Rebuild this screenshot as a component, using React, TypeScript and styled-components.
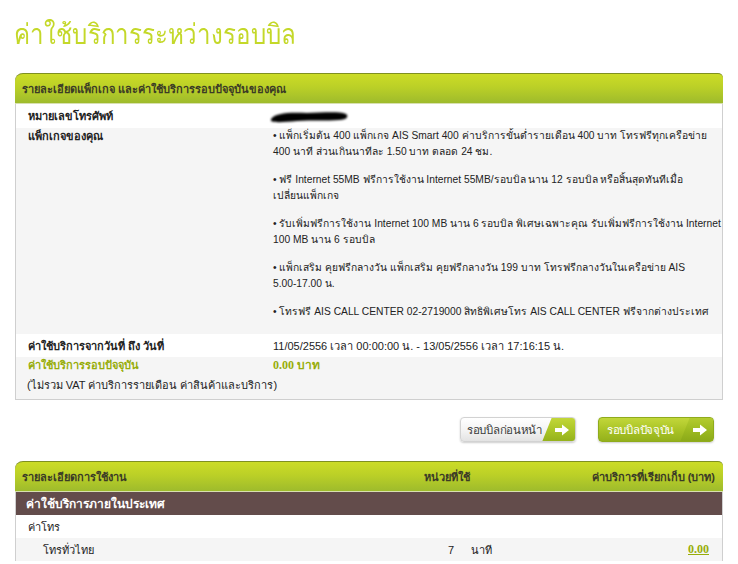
import React from "react";
import styled, { createGlobalStyle } from "styled-components";

const GlobalStyle = createGlobalStyle`
  html, body { margin: 0; padding: 0; background: #ffffff; }
  body { font-family: Tahoma, "Liberation Sans", "DejaVu Sans", sans-serif; font-size: 11px; color: #222; }
`;

const Page = styled.div`
  width: 708px;
  padding: 0 0 0 15px;
`;

const Title = styled.h1`
  margin: 0 0 0 -1px;
  padding: 18px 0 0 0;
  height: 73px;
  box-sizing: border-box;
  font-size: 28px;
  line-height: 34px;
  font-weight: normal;
  color: #c4d829;
  transform: scaleX(0.86);
  transform-origin: left top;
`;

const Panel = styled.section`
  border: 1px solid #cfcfcf;
  border-top: none;
  border-radius: 8px 5px 0 0;
  background: #f5f5f5;
`;

const PanelHeader = styled.div<{ $cols?: boolean }>`
  height: 31px;
  box-sizing: border-box;
  margin: 0 -1px;
  border-top: 1px solid #7f9020;
  border-bottom: 1px solid #d8e0b0;
  border-radius: 8px 5px 0 0;
  background: linear-gradient(#ccdc26, #bbd027 45%, #9ebb2c);
  display: grid;
  grid-template-columns: ${(p) => (p.$cols ? "1fr 120px 245px" : "1fr")};
  align-items: center;
  padding: 0 8px 0 7px;
  font-weight: bold;
  color: #3b3b26;
  font-size: 11px;
`;

const HeadCell = styled.span<{ $right?: boolean }>`
  text-align: ${(p) => (p.$right ? "right" : "left")};
`;

const InfoRow = styled.div<{ $white?: boolean; $h?: number; $pt?: number }>`
  display: flex;
  align-items: flex-start;
  box-sizing: border-box;
  min-height: ${(p) => (p.$h ? `${p.$h}px` : "auto")};
  padding: ${(p) => (p.$pt ?? 4)}px 1px 0 12px;
  background: ${(p) => (p.$white ? "#ffffff" : "#f5f5f5")};
  line-height: 16px;
`;

const Label = styled.div<{ $green?: boolean }>`
  flex: 0 0 245px;
  font-weight: bold;
  color: ${(p) => (p.$green ? "#97ad0a" : "#222")};
`;

const Value = styled.div<{ $green?: boolean }>`
  flex: 1 1 auto;
  min-width: 0;
  color: ${(p) => (p.$green ? "#97ad0a" : "#222")};
  font-weight: ${(p) => (p.$green ? "bold" : "normal")};
  font-family: ${(p) => (p.$green ? `"Liberation Serif", Tahoma, serif` : "inherit")};
  font-size: ${(p) => (p.$green ? "12px" : "11px")};
`;

const PackList = styled.div`
  font-size: 10.25px;
  padding-bottom: 14px;
`;

const PackItem = styled.p`
  margin: 0 0 12px 0;
  line-height: 16px;
  &:last-child { margin-bottom: 0; }
`;

const NoBreak = styled.span`
  white-space: nowrap;
`;

const Note = styled.div`
  padding: 4px 12px 6px 11px;
  line-height: 16px;
`;

const Scribble = styled.svg`
  display: block;
  margin: 2px 0 0 -6px;
`;

const ButtonBar = styled.div`
  display: flex;
  justify-content: flex-end;
  gap: 22px;
  padding: 17px 9px 0 0;
  height: 61px;
  box-sizing: border-box;
`;

const BillButton = styled.button<{ $primary?: boolean }>`
  position: relative;
  width: 116px;
  height: 25px;
  border-radius: 4px;
  border: 1px solid ${(p) => (p.$primary ? "#8fab1c" : "#d2d2d2")};
  background: ${(p) =>
    p.$primary
      ? "linear-gradient(#c2d73a, #a8c225 55%, #94b11c)"
      : "linear-gradient(#ffffff, #f3f3f3 55%, #e3e3e3)"};
  box-shadow: 0 1px 2px rgba(0, 0, 0, 0.2);
  padding: 0 0 0 ${(p) => (p.$primary ? "8px" : "6px")};
  text-align: left;
  font-family: "Liberation Sans", Tahoma, sans-serif;
  font-size: 11.5px;
  letter-spacing: -0.3px;
  color: ${(p) => (p.$primary ? "#ffffff" : "#3a3a3a")};
  overflow: hidden;
  white-space: nowrap;
  cursor: pointer;
`;

const ArrowTab = styled.span<{ $primary?: boolean }>`
  position: absolute;
  right: -1px;
  top: -1px;
  bottom: -1px;
  width: 34px;
  background: ${(p) =>
    p.$primary
      ? "linear-gradient(#b5cd30, #9cb920 55%, #8aa818)"
      : "linear-gradient(#c4d83a, #a9c426 55%, #93b01b)"};
  clip-path: polygon(10px 0, 100% 0, 100% 100%, 0 100%);
  display: flex;
  align-items: center;
  justify-content: center;
  padding-left: 6px;
  box-sizing: border-box;
`;

const Table = styled.section`
  border-left: 1px solid #cfcfcf;
  border-right: 1px solid #cfcfcf;
  border-radius: 8px 5px 0 0;
  background: #ffffff;
`;

const GroupRow = styled.div`
  height: 23px;
  background: #634c4b;
  color: #ffffff;
  font-weight: bold;
  font-size: 12px;
  display: flex;
  align-items: center;
  padding-left: 10px;
`;

const UsageRow = styled.div<{ $alt?: boolean; $indent: number }>`
  height: 23px;
  display: grid;
  grid-template-columns: 1fr 43px 55px 200px;
  align-items: center;
  background: ${(p) => (p.$alt ? "#f5f5f5" : "#ffffff")};
  padding-left: ${(p) => p.$indent}px;
  padding-right: 13px;
`;

const Qty = styled.span`
  text-align: right;
`;

const Unit = styled.span`
  padding-left: 17px;
`;

const Amount = styled.a`
  justify-self: end;
  color: #97ad0a;
  font-weight: bold;
  font-family: "Liberation Serif", serif;
  font-size: 12px;
  text-decoration: underline;
`;

const Arrow = () => (
  <svg width="16" height="12" viewBox="0 0 16 12">
    <path d="M1 4h7V0.5L15 6l-7 5.5V8H1z" fill="#ffffff" />
  </svg>
);

export default function App() {
  return (
    <>
      <GlobalStyle />
      <Page>
        <Title>ค่าใช้บริการระหว่างรอบบิล</Title>
        <Panel>
          <PanelHeader>
            <HeadCell>รายละเอียดแพ็กเกจ และค่าใช้บริการรอบปัจจุบันของคุณ</HeadCell>
          </PanelHeader>
          <InfoRow $white $h={24} $pt={4}>
            <Label>หมายเลขโทรศัพท์</Label>
            <Value>
              <Scribble width="84" height="14" viewBox="0 0 84 14">
                <defs>
                  <filter id="soft" x="-10%" y="-30%" width="120%" height="160%">
                    <feGaussianBlur stdDeviation="0.9" />
                  </filter>
                </defs>
                <path
                  d="M4 9 C8 3, 22 2, 40 3 C55 3, 70 1, 79 4 C82 6, 80 10, 72 10 C60 11, 45 10, 30 11 C18 12, 8 13, 4 11 Z"
                  fill="#000"
                  filter="url(#soft)"
                />
              </Scribble>
            </Value>
          </InfoRow>
          <InfoRow $pt={0}>
            <Label>แพ็กเกจของคุณ</Label>
            <Value>
              <PackList>
                <PackItem>
                  • แพ็กเริ่มต้น 400 แพ็กเกจ AIS Smart 400 ค่าบริการขั้นต่ำรายเดือน 400 บาท โทรฟรีทุกเครือข่าย 400 นาที ส่วนเกินนาทีละ 1.50 บาท ตลอด 24 ชม.
                </PackItem>
                <PackItem>
                  • ฟรี Internet 55MB ฟรีการใช้งาน Internet 55MB/รอบบิล นาน 12 รอบบิล หรือสิ้นสุดทันทีเมื่อ{" "}
                  <NoBreak>เปลี่ยนแพ็กเกจ</NoBreak>
                </PackItem>
                <PackItem>
                  • รับเพิ่มฟรีการใช้งาน Internet 100 MB นาน 6 รอบบิล พิเศษเฉพาะคุณ รับเพิ่มฟรีการใช้งาน Internet 100 MB นาน 6 รอบบิล
                </PackItem>
                <PackItem>
                  • แพ็กเสริม คุยฟรีกลางวัน แพ็กเสริม คุยฟรีกลางวัน 199 บาท โทรฟรีกลางวันในเครือข่าย AIS{" "}
                  <NoBreak>5.00-17.00 น.</NoBreak>
                </PackItem>
                <PackItem>
                  • โทรฟรี AIS CALL CENTER 02-2719000 สิทธิพิเศษโทร AIS CALL CENTER ฟรีจากต่างประเทศ
                </PackItem>
              </PackList>
            </Value>
          </InfoRow>
          <InfoRow $white $h={23} $pt={4}>
            <Label>ค่าใช้บริการจากวันที่ ถึง วันที่</Label>
            <Value>11/05/2556 เวลา 00:00:00 น. - 13/05/2556 เวลา 17:16:15 น.</Value>
          </InfoRow>
          <InfoRow $pt={0}>
            <Label $green>ค่าใช้บริการรอบปัจจุบัน</Label>
            <Value $green>0.00 บาท</Value>
          </InfoRow>
          <Note>(ไม่รวม VAT ค่าบริการรายเดือน ค่าสินค้าและบริการ)</Note>
        </Panel>

        <ButtonBar>
          <BillButton>
            รอบบิลก่อนหน้า
            <ArrowTab>
              <Arrow />
            </ArrowTab>
          </BillButton>
          <BillButton $primary>
            รอบบิลปัจจุบัน
            <ArrowTab $primary>
              <Arrow />
            </ArrowTab>
          </BillButton>
        </ButtonBar>

        <Table>
          <PanelHeader $cols>
            <HeadCell>รายละเอียดการใช้งาน</HeadCell>
            <HeadCell $right>หน่วยที่ใช้</HeadCell>
            <HeadCell $right>ค่าบริการที่เรียกเก็บ (บาท)</HeadCell>
          </PanelHeader>
          <GroupRow>ค่าใช้บริการภายในประเทศ</GroupRow>
          <UsageRow $indent={12}>
            <span>ค่าโทร</span>
          </UsageRow>
          <UsageRow $alt $indent={27}>
            <span>โทรทั่วไทย</span>
            <Qty>7</Qty>
            <Unit>นาที</Unit>
            <Amount href="#">0.00</Amount>
          </UsageRow>
        </Table>
      </Page>
    </>
  );
}
